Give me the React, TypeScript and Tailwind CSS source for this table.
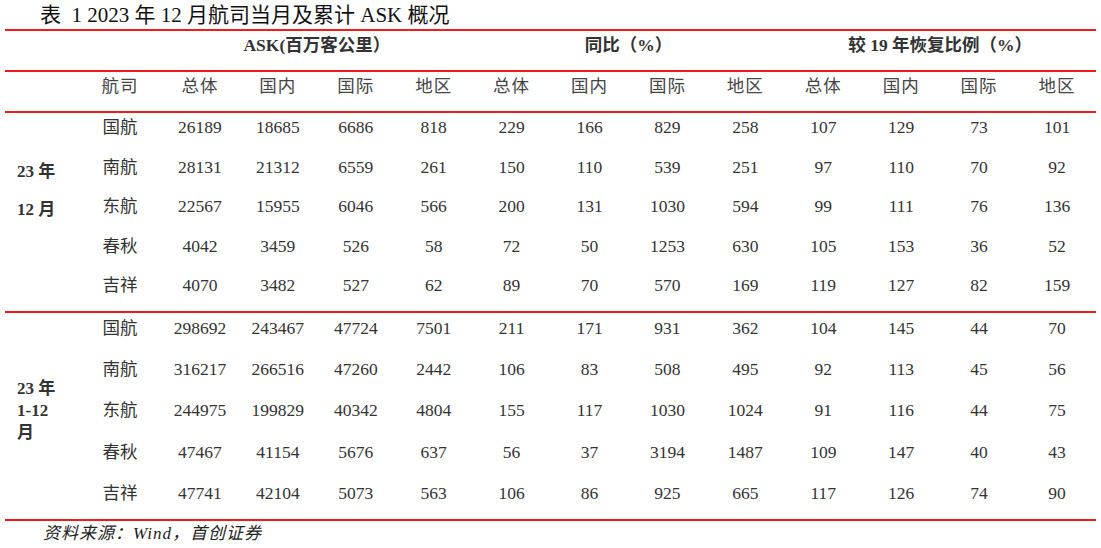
const cols = 'grid grid-cols-[74px_82px_repeat(12,minmax(0,1fr))]'
const font = { fontFamily: '"Liberation Serif", "Noto Sans CJK SC", serif' }

const monthRows: [string, number[]][] = [
  ['国航', [26189, 18685, 6686, 818, 229, 166, 829, 258, 107, 129, 73, 101]],
  ['南航', [28131, 21312, 6559, 261, 150, 110, 539, 251, 97, 110, 70, 92]],
  ['东航', [22567, 15955, 6046, 566, 200, 131, 1030, 594, 99, 111, 76, 136]],
  ['春秋', [4042, 3459, 526, 58, 72, 50, 1253, 630, 105, 153, 36, 52]],
  ['吉祥', [4070, 3482, 527, 62, 89, 70, 570, 169, 119, 127, 82, 159]],
]

const yearRows: [string, number[]][] = [
  ['国航', [298692, 243467, 47724, 7501, 211, 171, 931, 362, 104, 145, 44, 70]],
  ['南航', [316217, 266516, 47260, 2442, 106, 83, 508, 495, 92, 113, 45, 56]],
  ['东航', [244975, 199829, 40342, 4804, 155, 117, 1030, 1024, 91, 116, 44, 75]],
  ['春秋', [47467, 41154, 5676, 637, 56, 37, 3194, 1487, 109, 147, 40, 43]],
  ['吉祥', [47741, 42104, 5073, 563, 106, 86, 925, 665, 117, 126, 74, 90]],
]

const subHeads = ['总体', '国内', '国际', '地区', '总体', '国内', '国际', '地区', '总体', '国内', '国际', '地区']

function Block({
  rows,
  rowClass,
  label,
}: {
  rows: [string, number[]][]
  rowClass: string
  label: React.ReactNode
}) {
  return (
    <div className="flex border-b-2 border-[#f21a1a]">
      <div className="w-[74px] shrink-0 pl-3 font-bold text-[17px] text-[#333]">{label}</div>
      <div className="flex-1">
        {rows.map(([name, vals]) => (
          <div key={name} className={`grid grid-cols-[82px_repeat(12,minmax(0,1fr))] ${rowClass}`}>
            <div className="text-center">{name}</div>
            {vals.map((v, i) => (
              <div key={i} className="text-center">{v}</div>
            ))}
          </div>
        ))}
      </div>
    </div>
  )
}

export default function App() {
  return (
    <div className="w-[1101px] h-[548px] bg-white px-[5px] text-[#333] text-[17.5px] leading-[20px]" style={font}>
      <div className="h-[29px] pl-[35px] flex items-center text-[21px] text-[#111]">
        表&nbsp;&nbsp;1 2023 年 12 月航司当月及累计 ASK 概况
      </div>

      <div className="border-t-2 border-[#f21a1a]">
        <div className={`${cols} h-[41px] pt-[4px] border-b-2 border-[#f21a1a] font-bold`}>
          <div />
          <div />
          <div className="col-span-4 text-center">ASK(百万客公里）</div>
          <div className="col-span-4 text-center">同比（%）</div>
          <div className="col-span-4 text-center">较 19 年恢复比例（%）</div>
        </div>

        <div className={`${cols} h-[41px] pt-[4px] border-b-2 border-[#f21a1a] text-[#444]`}>
          <div />
          <div className="text-center tracking-[1px]">航司</div>
          {subHeads.map((h, i) => (
            <div key={i} className="text-center tracking-[1px]">{h}</div>
          ))}
        </div>

        <Block
          rows={monthRows}
          rowClass="h-[39.6px] pt-[4px]"
          label={
            <div className="pt-[49px] flex flex-col gap-[18px]">
              <div>23&nbsp;年</div>
              <div>12&nbsp;月</div>
            </div>
          }
        />

        <Block
          rows={yearRows}
          rowClass="h-[41.2px] pt-[5px]"
          label={
            <div className="pt-[66px] flex flex-col gap-[2px]">
              <div>23&nbsp;年</div>
              <div>1-12</div>
              <div>月</div>
            </div>
          }
        />
      </div>

      <div className="pl-[38px] pt-[3px] italic text-[17px] tracking-[1px] text-[#222]">资料来源：Wind，首创证券</div>
    </div>
  )
}
